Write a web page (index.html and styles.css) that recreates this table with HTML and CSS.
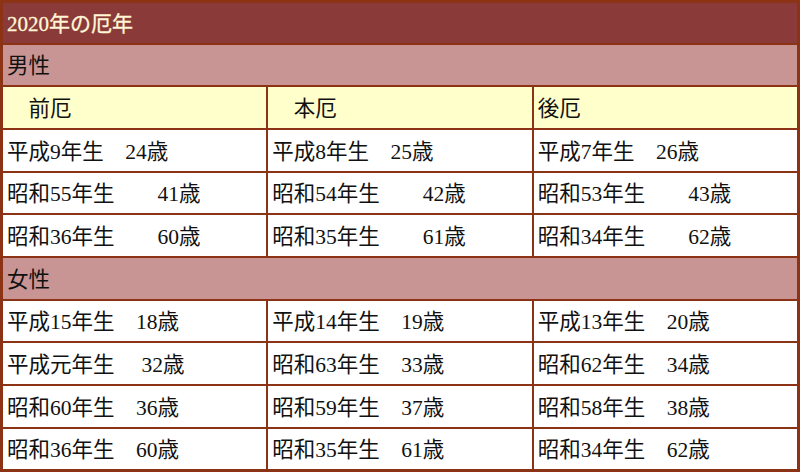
FILE: index.html
```html
<!DOCTYPE html>
<html lang="ja">
<head>
<meta charset="utf-8">
<title>2020年の厄年</title>
<link rel="stylesheet" href="styles.css">
</head>
<body>
<table class="yaku">
  <tr><th class="title" colspan="3">2020年の厄年</th></tr>
  <tr><td class="sex" colspan="3">男性</td></tr>
  <tr class="head"><td>　前厄</td><td>　本厄</td><td>後厄</td></tr>
  <tr><td>平成9年生　24歳</td><td>平成8年生　25歳</td><td>平成7年生　26歳</td></tr>
  <tr><td>昭和55年生　　41歳</td><td>昭和54年生　　42歳</td><td>昭和53年生　　43歳</td></tr>
  <tr><td>昭和36年生　　60歳</td><td>昭和35年生　　61歳</td><td>昭和34年生　　62歳</td></tr>
  <tr><td class="sex" colspan="3">女性</td></tr>
  <tr><td>平成15年生　18歳</td><td>平成14年生　19歳</td><td>平成13年生　20歳</td></tr>
  <tr><td>平成元年生　 32歳</td><td>昭和63年生　33歳</td><td>昭和62年生　34歳</td></tr>
  <tr><td>昭和60年生　36歳</td><td>昭和59年生　37歳</td><td>昭和58年生　38歳</td></tr>
  <tr><td>昭和36年生　60歳</td><td>昭和35年生　61歳</td><td>昭和34年生　62歳</td></tr>
</table>
</body>
</html>
```
FILE: styles.css
```css
html, body {
  margin: 0;
  padding: 0;
  background: #ffffff;
}
.yaku {
  width: 800px;
  border-collapse: collapse;
  border: 3px solid #8b3314;
  table-layout: fixed;
  font-family: "Liberation Serif", "Noto Sans CJK JP", serif;
  font-size: 21.5px;
  color: #111111;
}
.yaku th,
.yaku td {
  border: 2px solid #8b3314;
  height: 42.7px;
  padding: 0 4px 2px;
  text-align: left;
  vertical-align: middle;
  font-weight: normal;
  box-sizing: border-box;
  background: #ffffff;
  white-space: pre;
}
.yaku th.title {
  height: 42px;
  background: #8b3a3a;
  color: #fff6d5;
  font-size: 21px;
  font-weight: normal;
  -webkit-text-stroke: 0.3px #fff6d5;
}
.yaku td.sex {
  background: #c99594;
}
.yaku tr.head td {
  background: #ffffcc;
}
```
